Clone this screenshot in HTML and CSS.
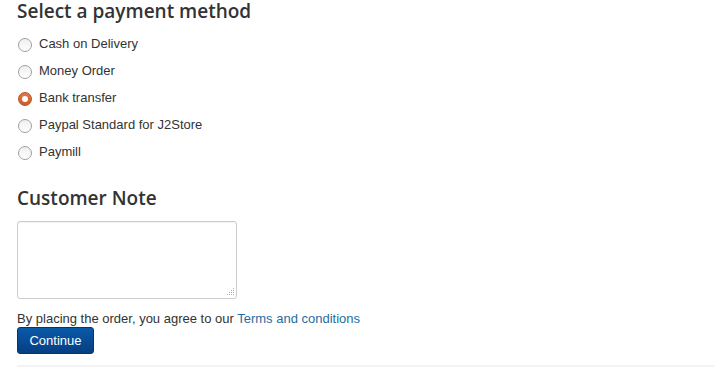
FILE: index.html
```html
<!DOCTYPE html>
<html lang="en">
<head>
    <meta charset="UTF-8">
    <title>Checkout</title>
    <link rel="stylesheet" href="styles.css">
</head>
<body>
    <div class="checkout">
        <h3 class="section-title">Select a payment method</h3>
        <div class="payment-list">
            <label class="payment-row"><input type="radio" name="payment" value="cod"> Cash on Delivery</label>
            <label class="payment-row"><input type="radio" name="payment" value="moneyorder"> Money Order</label>
            <label class="payment-row"><input type="radio" name="payment" value="banktransfer" checked> Bank transfer</label>
            <label class="payment-row"><input type="radio" name="payment" value="paypal"> Paypal Standard for J2Store</label>
            <label class="payment-row"><input type="radio" name="payment" value="paymill"> Paymill</label>
        </div>

        <h3 class="section-title note-title">Customer Note</h3>
        <div class="note-box">
            <textarea class="customer-note" name="customer_note"></textarea>
            <svg class="grip" width="8" height="8" viewBox="0 0 8 8">
                <rect x="6" y="0" width="1" height="1"/>
                <rect x="4" y="2" width="1" height="1"/>
                <rect x="6" y="2" width="1" height="1"/>
                <rect x="2" y="4" width="1" height="1"/>
                <rect x="4" y="4" width="1" height="1"/>
                <rect x="6" y="4" width="1" height="1"/>
                <rect x="0" y="6" width="1" height="1"/>
                <rect x="2" y="6" width="1" height="1"/>
                <rect x="4" y="6" width="1" height="1"/>
                <rect x="6" y="6" width="1" height="1"/>
            </svg>
        </div>

        <p class="terms">By placing the order, you agree to our <a href="#">Terms and conditions</a></p>
        <button class="continue-button">Continue</button>
        <div class="footer-band"></div>
    </div>
</body>
</html>
```

FILE: styles.css
```css
* {
    box-sizing: border-box;
}
body {
    margin: 0;
    font-family: "Liberation Sans", Arial, sans-serif;
    font-size: 13px;
    color: #333333;
    background: #ffffff;
}
.checkout {
    padding-left: 17px;
}
.section-title {
    font-family: "Open Sans", sans-serif;
    font-weight: 600;
    font-size: 19px;
    line-height: 22px;
    margin: 0;
    color: #333333;
}
.payment-list {
    display: flex;
    flex-direction: column;
    padding-top: 8px;
}
.payment-row {
    display: flex;
    align-items: center;
    height: 27px;
    cursor: pointer;
}
.payment-row input {
    -webkit-appearance: none;
    appearance: none;
    width: 14px;
    height: 14px;
    margin: 2px 7px 0 1px;
    border: 1px solid #a0a0a0;
    border-radius: 50%;
    background: linear-gradient(#efefef, #ffffff);
    position: relative;
}
.payment-row input:checked {
    border-color: #b5532a;
    background: linear-gradient(#e47a45, #cc5a26);
}
.payment-row input:checked::after {
    content: "";
    position: absolute;
    left: 3px;
    top: 3px;
    width: 6px;
    height: 6px;
    border-radius: 50%;
    background: #ffffff;
}
.note-title {
    margin-top: 22px;
}
.note-box {
    position: relative;
    width: 220px;
    margin-top: 12px;
}
.customer-note {
    display: block;
    width: 220px;
    height: 78px;
    border: 1px solid #cccccc;
    border-radius: 3px;
    box-shadow: inset 0 1px 1px rgba(0,0,0,0.05);
    resize: none;
}
.grip {
    position: absolute;
    right: 2px;
    bottom: 3px;
    fill: #b0b0b0;
}
.terms {
    margin: 12px 0 0;
    line-height: 16px;
}
.terms a {
    color: #1f6da0;
    text-decoration: none;
}
.continue-button {
    display: block;
    width: 77px;
    height: 27px;
    margin-top: 0;
    padding: 0;
    font-family: "Liberation Sans", Arial, sans-serif;
    font-size: 13px;
    color: #ffffff;
    background: linear-gradient(#0a5aa8, #063e82);
    border: 1px solid #05346e;
    border-radius: 3px;
}
.footer-band {
    height: 10px;
    margin-top: 11px;
    background: #f3f3f3;
}
```
